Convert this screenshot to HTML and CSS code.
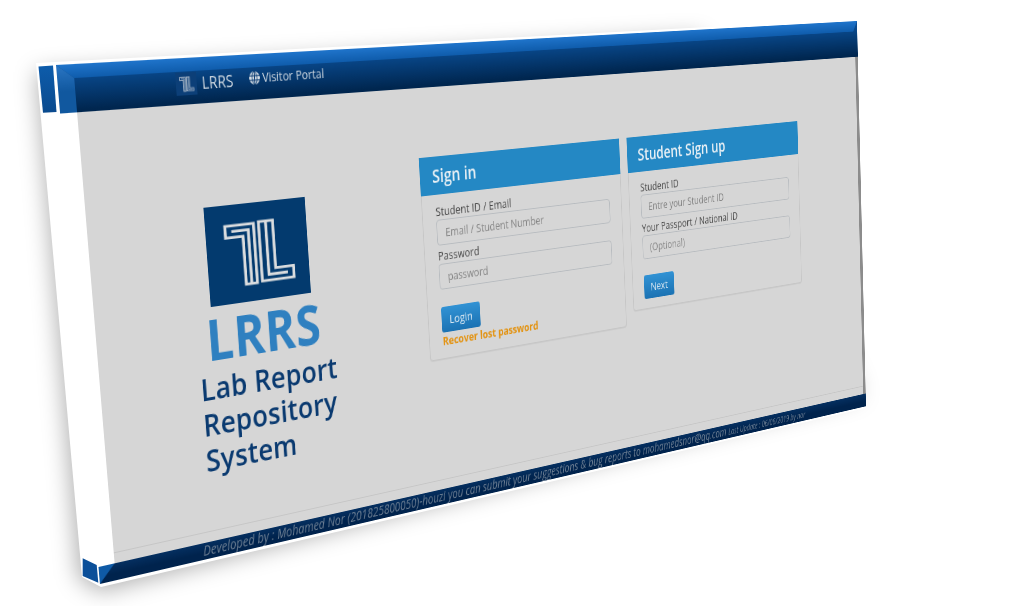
FILE: index.html
```html
<!DOCTYPE html>
<html lang="en">
<head>
  <meta charset="UTF-8" />
  <title>Lab Report Repository System</title>
  <link rel="stylesheet" href="styles.css">
</head>
<body>

  <svg width="0" height="0" class="defs">
    <defs>
      <symbol id="mark" viewBox="0 0 100 100" preserveAspectRatio="none">
        <path d="M19 21 H47 V82 H36 V33 H19 Z" />
        <path d="M25 27 H41.5 V82" />
        <path d="M52 20 H66 V69 H84 V81 H52 Z" />
        <path d="M59 20 V75 H78" />
      </symbol>
    </defs>
  </svg>

  <div class="stage">
    <!-- side of the box, drawn on the screen coordinates -->
    <svg class="backdrop" width="1031" height="606" viewBox="0 0 1031 606">
      <defs>
        <filter id="soft" x="-10%" y="-10%" width="120%" height="130%">
          <feGaussianBlur stdDeviation="11" />
        </filter>
        <linearGradient id="sideBlue" x1="0" y1="0" x2="0" y2="1">
          <stop offset="0" stop-color="#0d5cab" />
          <stop offset="1" stop-color="#0a4a8e" />
        </linearGradient>
      </defs>
      <polygon class="shadow" points="36,72 700,36 860,395 100,592 78,578" filter="url(#soft)" />
      <polygon class="sheet" points="36,63 857,19 866,408 101,587 82,577" />
      <polygon fill="url(#sideBlue)" points="38.5,66.5 53,65.5 56.5,112 43,112.8" />
      <polygon fill="#0b4f99" points="82.7,558.3 96.7,565 98.3,582.7 82.7,576" />
    </svg>

    <div class="plane">
      <header class="topbar">
        <span class="navlogo"><svg class="mark mark-small"><use href="#mark" /></svg></span>
        <span class="brandname">LRRS</span>
        <span class="navlink">
          <svg class="globe" viewBox="0 0 16 16">
            <circle cx="8" cy="8" r="8" fill="#d5dde5" />
            <path d="M0 5.2 H16 M0 10.8 H16 M8 0 V16" stroke="#0a3b72" stroke-width="1.3" fill="none" />
            <ellipse cx="8" cy="8" rx="3.6" ry="8" stroke="#0a3b72" stroke-width="1.1" fill="none" />
          </svg>
          Visitor Portal
        </span>
      </header>

      <main class="main">
        <section class="brand">
          <div class="logo"><svg class="mark"><use href="#mark" /></svg></div>
          <div class="lrrs">LRRS</div>
          <div class="fullname">Lab Report<br>Repository<br>System</div>
        </section>

        <section class="cards">
          <form class="card card-login">
            <h2>Sign in</h2>
            <div class="card-body">
              <label>Student ID / Email</label>
              <input type="text" placeholder="Email / Student Number" />
              <label class="second">Password</label>
              <input type="text" placeholder="password" />
              <button type="button" class="btn btn-login">Login</button>
              <a class="recover">Recover lost password</a>
            </div>
          </form>

          <form class="card">
            <h2>Student Sign up</h2>
            <div class="card-body">
              <label>Student ID</label>
              <input type="text" placeholder="Entre your Student ID" />
              <label class="second">Your Passport / National ID</label>
              <input type="text" placeholder="(Optional)" />
              <button type="button" class="btn btn-next">Next</button>
            </div>
          </form>
        </section>
      </main>

      <footer class="footer">
        <span>Developed by : Mohamed Nor (201825800050)-houzi you can submit your suggestions &amp; bug reports to mohamedsnor@qq.com <small>Last Update : 06/06/2019 by nor</small></span>
      </footer>
    </div>
  </div>

</body>
</html>
```

FILE: styles.css
```css
* {
  box-sizing: border-box;
}
html, body {
  margin: 0;
  padding: 0;
  background: #fff;
  overflow: hidden;
}
.defs {
  position: absolute;
}

.stage {
  position: relative;
  width: 1031px;
  height: 606px;
  overflow: hidden;
}
.backdrop {
  position: absolute;
  left: 0;
  top: 0;
}
.shadow {
  fill: rgba(0, 0, 0, 0.3);
}
.sheet {
  fill: #fff;
}

/* whole page tilted in perspective */
.plane {
  position: absolute;
  left: 0;
  top: 0;
  width: 1150px;
  height: 500px;
  display: flex;
  flex-direction: column;
  font-family: "Open Sans", "Noto Sans", sans-serif;
  transform-origin: 0 0;
  transform: matrix3d(0.969452, -0.031574, 0, 0.00031847,
                      0.09628, 1.08842, 0, 0.00008278,
                      0, 0, 1, 0,
                      56, 65, 0, 1);
  filter: blur(0.4px);
}

/* top bar */
.topbar {
  position: relative;
  height: 45px;
  flex: none;
  display: flex;
  align-items: center;
  padding: 4px 0 0 129px;
  background: linear-gradient(#0a4c92 13%, #00264f 95%);
  color: #cfd8e1;
}
.topbar::before {
  content: "";
  position: absolute;
  left: 0;
  right: 0;
  top: 0;
  height: 13px;
  background: linear-gradient(#1f74cb, #0f5cab);
  clip-path: polygon(0 0, 100% 0, calc(100% - 8px) 100%, 18px 100%);
}
.topbar::after {
  content: "";
  position: absolute;
  left: 0;
  top: 0;
  width: 18px;
  height: 45px;
  background: linear-gradient(#2a76c4, #11589f 55%);
  clip-path: polygon(0 0, 100% 13px, 100% 100%, 0 100%);
}
.navlogo {
  width: 24px;
  height: 22px;
  margin-right: 6px;
  background: #0c3f78;
}
.mark {
  display: block;
  width: 100%;
  height: 100%;
  fill: none;
  stroke: #dadcde;
  stroke-width: 2.8px;
}
.mark-small {
  stroke: #b4c0cd;
  stroke-width: 3.4px;
}
.brandname {
  font-size: 16px;
  margin-right: 19px;
}
.navlink {
  display: flex;
  align-items: center;
  gap: 3px;
  font-size: 12.8px;
  font-weight: 500;
  margin-top: -3px;
}
.globe {
  width: 13px;
  height: 13px;
}

/* middle */
.main {
  flex: 1;
  position: relative;
  display: flex;
  margin-left: 18px;
  padding-left: 115px;
  background: #d6d6d6;
  border-right: 5px solid #8c8c8c;
}
.main::after {
  content: "";
  position: absolute;
  left: 0;
  right: 0;
  bottom: 10px;
  border-top: 1px solid #c6c6c6;
}
.brand {
  width: 292px;
  flex: none;
  padding-top: 102px;
  color: #0a3a70;
}
.logo {
  width: 123px;
  height: 99px;
  margin-left: 17px;
  background: #033a6e;
}
.lrrs {
  margin: 1px 0 0 9px;
  font-size: 57px;
  line-height: 62px;
  font-weight: 700;
  letter-spacing: 0.5px;
  color: #2f80c0;
}
.fullname {
  margin-top: 0;
  margin-left: -2px;
  font-size: 31.5px;
  line-height: 36px;
  font-weight: 600;
  letter-spacing: 0.3px;
}

.cards {
  display: flex;
  align-items: flex-start;
  gap: 12px;
  padding-top: 74px;
}
.card {
  width: 297px;
  margin: 0;
  border: 1px solid #c6c6c6;
  border-top: 0;
  border-radius: 0 0 4px 4px;
  box-shadow: 0 1px 1px rgba(0, 0, 0, 0.06);
}
.card h2 {
  margin: 0 -1px;
  height: 41px;
  padding: 0 17px;
  font-size: 19.5px;
  line-height: 41px;
  font-weight: 600;
  color: #e9f0f5;
  background: #2488c4;
}
.card-body {
  display: flex;
  flex-direction: column;
  align-items: flex-start;
  padding: 9px 18px 11px;
}
.card-login .card-body {
  padding-bottom: 8px;
}
.card label {
  height: 18px;
  font-size: 13px;
  line-height: 18px;
  color: #454545;
}
.card label.second {
  margin-top: 2px;
}
.card input {
  width: 100%;
  height: 28px;
  padding: 0 11px;
  font: 12.8px "Open Sans", sans-serif;
  border: 1px solid #b8bcc0;
  border-radius: 4px;
  background: #d6d6d6;
  outline: none;
}
.card input::placeholder {
  color: #858585;
  opacity: 1;
}
.btn {
  height: 28px;
  margin-top: 19px;
  padding: 0;
  border: 0;
  border-radius: 3px;
  font: 13px "Open Sans", sans-serif;
  color: #e3edf5;
  background: linear-gradient(#3192d4, #1b72b3);
}
.btn-login {
  width: 55px;
}
.btn-next {
  width: 50px;
}
.recover {
  height: 20px;
  font-size: 12.5px;
  line-height: 20px;
  font-weight: 700;
  color: #e3920f;
}

/* footer */
.footer {
  position: relative;
  height: 17px;
  margin-bottom: 1px;
  flex: none;
  text-align: center;
  font-size: 13.6px;
  line-height: 16px;
  font-style: italic;
  white-space: nowrap;
  color: #6d7f93;
  background: linear-gradient(#052f60, #00234d 60%);
}
.footer::before {
  content: "";
  position: absolute;
  left: 0;
  top: 0;
  width: 18px;
  height: 17px;
  background: #0f5aa6;
  clip-path: polygon(0 0, 100% 0, 0 100%);
}
.footer small {
  font-size: 10px;
}
```
